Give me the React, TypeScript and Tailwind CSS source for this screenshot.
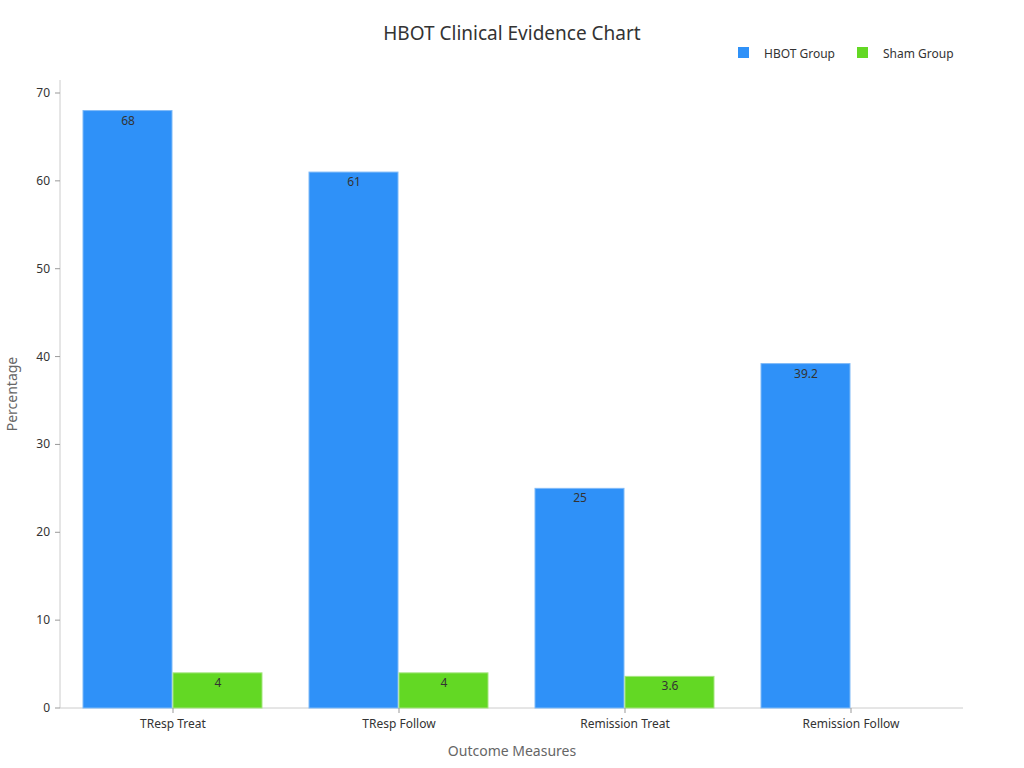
export default function App() {
  const y0 = 708, k = 615 / 70;
  const Y = (v: number) => y0 - v * k;
  const cats = ["TResp Treat", "TResp Follow", "Remission Treat", "Remission Follow"];
  const hb = [68, 61, 25, 39.2];
  const sh: (number | null)[] = [4, 4, 3.6, null];
  return (
    <div className="w-[1024px] h-[768px] bg-white font-['DejaVu_Sans',sans-serif]">
      <svg width="1024" height="768" className="font-['DejaVu_Sans',sans-serif]">
        <text x="512" y="40" textAnchor="middle" fontSize="19" fill="#333">HBOT Clinical Evidence Chart</text>
        <rect x="738" y="47" width="11" height="11" fill="#2f91f8" />
        <text x="764" y="58" fontSize="12" fill="#333">HBOT Group</text>
        <rect x="857" y="47" width="11" height="11" fill="#63d824" />
        <text x="883" y="58" fontSize="12" fill="#333">Sham Group</text>
        <line x1="60" y1="80" x2="60" y2="708" stroke="#ccc" />
        <line x1="60" y1="708" x2="963" y2="708" stroke="#ccc" />
        {[0, 10, 20, 30, 40, 50, 60, 70].map(v => (
          <g key={v}>
            <line x1="55" x2="60" y1={Y(v)} y2={Y(v)} stroke="#999" />
            <text x="50" y={Y(v) + 4} textAnchor="end" fontSize="12" fill="#333">{v}</text>
          </g>
        ))}
        {cats.map((c, i) => {
          const gx = 60 + i * 226;
          const cx = gx + 113;
          const s = sh[i];
          return (
            <g key={c}>
              <rect x={gx + 23} y={Y(hb[i])} width="89" height={y0 - Y(hb[i])} fill="#2f91f8" stroke="#7fbaf8" />
              <text x={gx + 68} y={Y(hb[i]) + 14} textAnchor="middle" fontSize="12" fill="#333">{hb[i]}</text>
              {s !== null && (
                <>
                  <rect x={gx + 113} y={Y(s)} width="89" height={y0 - Y(s)} fill="#63d824" stroke="#a5e57f" />
                  <text x={gx + 158} y={Y(s) + 14} textAnchor="middle" fontSize="12" fill="#333">{s}</text>
                </>
              )}
              <line x1={cx} x2={cx} y1="708" y2="713" stroke="#999" />
              <text x={cx} y="728" textAnchor="middle" fontSize="12" fill="#333">{c}</text>
            </g>
          );
        })}
        <text x="512" y="756" textAnchor="middle" fontSize="14" fill="#666">Outcome Measures</text>
        <text transform="translate(17 394) rotate(-90)" textAnchor="middle" fontSize="14" fill="#666">Percentage</text>
      </svg>
    </div>
  );
}
